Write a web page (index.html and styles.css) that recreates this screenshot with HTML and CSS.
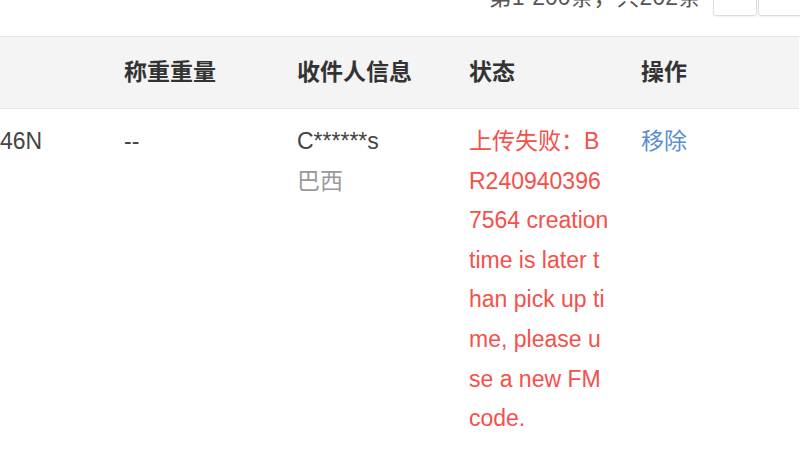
FILE: index.html
```html
<!DOCTYPE html>
<html>
<head>
    <meta charset="utf-8">
    <link rel="stylesheet" href="styles.css">
</head>
<body>
    <div class="toolbar">
        <span class="total">第1-200条，共202条</span>
        <div class="pages">
            <span class="page-btn"></span>
            <span class="page-btn"></span>
        </div>
    </div>

    <div class="table">
        <div class="row head">
            <div class="cell"></div>
            <div class="cell">称重重量</div>
            <div class="cell">收件人信息</div>
            <div class="cell">状态</div>
            <div class="cell">操作</div>
        </div>
        <div class="row body">
            <div class="cell">46N</div>
            <div class="cell">--</div>
            <div class="cell">
                <div>C******s</div>
                <div class="muted">巴西</div>
            </div>
            <div class="cell status-fail">上传失败：BR2409403967564 creation time is later than pick up time, please use a new FM code.</div>
            <div class="cell"><a class="link" href="#">移除</a></div>
        </div>
    </div>
</body>
</html>
```

FILE: styles.css
```css
body {
    margin: 0;
    font-family: "Liberation Sans", "Noto Sans CJK SC", sans-serif;
    font-size: 23px;
    color: #333;
    background: #fff;
    overflow: hidden;
}

.toolbar {
    height: 36px;
    display: flex;
    justify-content: flex-end;
    align-items: flex-start;
    gap: 12px;
}

.total {
    margin-top: -18px;
    line-height: 30px;
    color: #555;
    white-space: nowrap;
}

.pages {
    display: flex;
    flex-shrink: 0;
    margin-top: -24px;
    margin-right: -2px;
}

.page-btn {
    width: 42px;
    height: 38px;
    border: 1px solid #ddd;
    border-radius: 3px;
    box-shadow: 0 1px 2px rgba(0,0,0,0.06);
}

.page-btn + .page-btn {
    margin-left: 1px;
}

.table {
    border-top: 1px solid #e8e8e8;
}

.row {
    display: grid;
    grid-template-columns: 124px 173px 172px 172px 1fr;
}

.row.head {
    height: 71px;
    align-items: center;
    background: #f4f4f4;
    border-bottom: 1px solid #e6e6e6;
    margin-right: 1px;
    font-weight: bold;
    color: #333;
}

.cell {
    padding-right: 31px;
    line-height: 39.6px;
}

.row.body {
    color: #444;
}

.row.body .cell {
    padding-top: 13px;
}

.row .muted {
    color: #999;
}

.row .status-fail {
    color: #f5504a;
    word-break: break-all;
}

.link {
    color: #5a8ed0;
    text-decoration: none;
}
```
